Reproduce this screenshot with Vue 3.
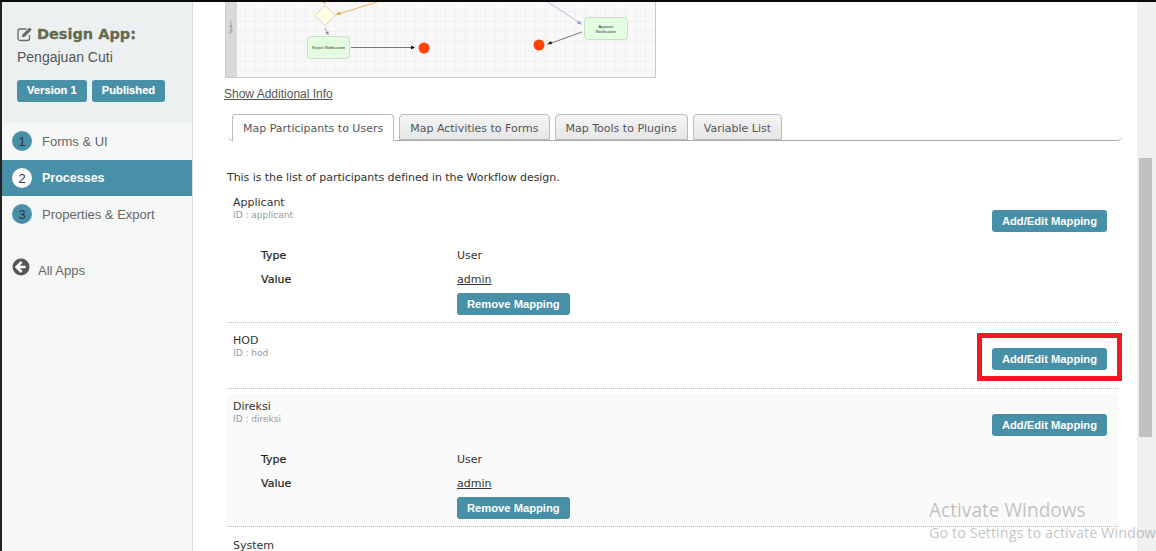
<script setup>
const participants = [
  { name: 'Applicant', id: 'applicant', mapped: true, shaded: false },
  { name: 'HOD', id: 'hod', mapped: false, shaded: false, marked: true },
  { name: 'Direksi', id: 'direksi', mapped: true, shaded: true }
]
const tabs = ['Map Participants to Users', 'Map Activities to Forms', 'Map Tools to Plugins', 'Variable List']
const menu = [
  { num: 1, label: 'Forms & UI' },
  { num: 2, label: 'Processes', active: true },
  { num: 3, label: 'Properties & Export' }
]
</script>

<template>
  <div class="screen">
    <aside class="sidebar">
      <div class="head">
        <h1 class="title">
          <svg class="edit" viewBox="0 0 16 16" width="16" height="16">
            <path d="M12.500 9v3.500a2 2 0 0 1-2 2H3a2 2 0 0 1-2-2V5a2 2 0 0 1 2-2h6.500" fill="none" stroke="#6b6b6b" stroke-width="1.300"/>
            <path d="M5.500 8.400 12.400 1.500l2.300 2.300-6.900 6.900-2.900.6z" fill="#6b6b6b"/>
          </svg>
          Design App:
        </h1>
        <div class="app-name">Pengajuan Cuti</div>
        <div class="badges">
          <span class="badge">Version 1</span>
          <span class="badge">Published</span>
        </div>
      </div>
      <nav class="menu">
        <a v-for="m in menu" :key="m.num" class="menu-item" :class="{ active: m.active }">
          <span class="num">{{ m.num }}</span>{{ m.label }}
        </a>
        <a class="all-apps">
          <svg viewBox="0 0 18 18" width="18" height="18">
            <circle cx="9" cy="9" r="8.500" fill="#555"/>
            <path d="M9.600 4 4.600 9l5 5M5 9h8.600" fill="none" stroke="#fff" stroke-width="2.600"/>
          </svg>
          All Apps
        </a>
      </nav>
    </aside>

    <main class="content">
      <div class="diagram">
        <svg viewBox="0 0 429 75" width="429" height="75">
          <defs>
            <pattern id="dots" width="10" height="10" patternUnits="userSpaceOnUse">
              <rect width="10" height="10" fill="#f8f8f8"/>
              <path d="M9.500 0v10M0 9.500h10" stroke="#ececec" stroke-width="1" stroke-dasharray="1 1"/>
            </pattern>
          </defs>
          <rect width="429" height="75" fill="url(#dots)"/>
          <rect width="11" height="75" fill="#d9d9d9"/>
          <text x="0" y="0" transform="translate(5.500 25) rotate(-90)" class="lane">System</text>
          <path d="M151 0 111 12.500" stroke="#e3b85a" fill="none"/>
          <path d="M109 13l5-3.500 1 3z" fill="#dfa93a"/>
          <path d="M96.500 0h3l-1 2z" fill="#e3a53a"/>
          <path d="M99 3.500 109 13.500 99 23.500 89 13.500z" fill="#fffde6" stroke="#d8d8b8"/>
          <path d="M99 26 102 32" stroke="#aaa" fill="none"/>
          <path d="M102.500 33.500l-3-3 3-1z" fill="#888"/>
          <path d="M322 0 354 21" stroke="#a9c2ea" fill="none"/>
          <path d="M356 22.500l-5-1 2-3z" fill="#7d9fdc"/>
          <rect x="81.500" y="34.500" width="42" height="22" rx="3" fill="#e4fde0" stroke="#cfdccf"/>
          <text x="102.500" y="46.500" class="node">Reject Notification</text>
          <path d="M125 45.500H186" stroke="#777" fill="none"/>
          <path d="M189 45.500l-4-2v4z" fill="#111"/>
          <circle cx="198" cy="46" r="5.500" fill="#ff4000"/>
          <rect x="358.500" y="15.500" width="43" height="22" rx="3" fill="#e4fde0" stroke="#cfdccf"/>
          <text x="380" y="26" class="node">Approve</text>
          <text x="380" y="30.500" class="node">Notification</text>
          <path d="M356 30 324 41.500" stroke="#777" fill="none"/>
          <path d="M321 42.500l4-3.500 1 3z" fill="#111"/>
          <circle cx="313" cy="43" r="5.500" fill="#ff4000"/>
        </svg>
      </div>
      <a class="more">Show Additional Info</a>

      <div class="tabs">
        <span v-for="(t, i) in tabs" :key="t" class="tab" :class="{ current: i === 0 }">{{ t }}</span>
      </div>

      <p class="intro">This is the list of participants defined in the Workflow design.</p>

      <div class="rows">
        <section v-for="p in participants" :key="p.id" class="row" :class="{ shaded: p.shaded, mapped: p.mapped }">
          <div class="row-top">
            <div>
              <div class="name">{{ p.name }}</div>
              <div class="pid">ID : {{ p.id }}</div>
            </div>
            <button class="btn add" :class="{ marked: p.marked }">Add/Edit Mapping</button>
          </div>
          <div v-if="p.mapped" class="detail">
            <div class="key">Type</div>
            <div>User</div>
            <div class="key">Value</div>
            <div>
              <a class="val-link">admin</a>
              <button class="btn remove">Remove Mapping</button>
            </div>
          </div>
        </section>
        <div class="name last">System</div>
      </div>
    </main>

    <div class="scrollbar"><div class="thumb"></div></div>

    <div class="activate">
      <div class="act-1">Activate Windows</div>
      <div class="act-2">Go to Settings to activate Windows.</div>
    </div>
  </div>
</template>

<style>
html, body { margin: 0; overflow: hidden; background: #fff; }
</style>

<style scoped>
.screen {
  position: relative;
  display: flex;
  width: 1156px;
  height: 551px;
  box-sizing: border-box;
  border-top: 2px solid #0a0a0a;
  overflow: hidden;
  background: #fff;
  font-family: "DejaVu Sans", sans-serif;
  font-size: 11px;
  color: #333;
}

.sidebar {
  width: 193px;
  flex: none;
  box-sizing: border-box;
  border-left: 2px solid #222;
  border-right: 1px solid #ddd;
  background: #f6f8f8;
  font-family: "Liberation Sans", sans-serif;
}
.head {
  height: 121px;
  box-sizing: border-box;
  padding: 23px 0 0 15px;
  background: #ecf0f1;
}
.title {
  display: flex;
  align-items: center;
  gap: 4px;
  margin: 0;
  height: 18px;
  font-family: "DejaVu Sans", sans-serif;
  font-size: 14.500px;
  font-weight: 700;
  color: #666a4e;
  -webkit-text-stroke: .3px #666a4e;
}
.app-name { margin-top: 5px; font-size: 14px; line-height: 18px; color: #555; }
.badges { display: flex; gap: 5px; margin-top: 14px; }
.badge {
  height: 22px;
  padding: 0 10px;
  border-radius: 3px;
  background: #4790a8;
  color: #fff;
  font-size: 11.200px;
  font-weight: 700;
  line-height: 21px;
  text-shadow: 0 0 1px rgba(255,255,255,.4);
}
.menu-item {
  display: flex;
  align-items: center;
  height: 37px;
  box-sizing: border-box;
  padding: 0 0 1px 10px;
  font-size: 13px;
  color: #666;
}
.menu-item.active {
  height: 36px;
  padding-bottom: 0;
  background: #4790a8;
  color: #fff;
  font-weight: 700;
  font-size: 12.500px;
}
.num {
  display: flex;
  align-items: center;
  justify-content: center;
  width: 20px;
  height: 20px;
  margin-right: 10px;
  border-radius: 50%;
  background: #4790a8;
  color: #333;
  font-size: 13px;
  font-weight: 400;
}
.active .num { background: #fff; }
.all-apps {
  display: flex;
  align-items: flex-start;
  gap: 8px;
  margin-top: 25px;
  padding-left: 10px;
  height: 20px;
  font-size: 13px;
  line-height: 25px;
  color: #666;
}

.content {
  flex: 1;
  min-width: 0;
  padding: 0 15px 0 32px;
}
.diagram {
  width: 429px;
  height: 75px;
  border: solid #ccc;
  border-width: 0 1px 1px 1px;
}
.diagram svg { display: block; }
.lane { font: 4px "Liberation Sans", sans-serif; fill: #777; text-anchor: middle; }
.node { font: 4.100px "Liberation Sans", sans-serif; fill: #333; text-anchor: middle; }
.more {
  display: block;
  margin: 8px 0 0 -1px;
  font: 12px/16px "Liberation Sans", sans-serif;
  color: #555;
  text-decoration: underline;
}

.tabs {
  display: flex;
  gap: 5px;
  height: 26px;
  margin: 12px 0 0 3px;
  padding-left: 4px;
  border-bottom: 1px solid #aaa;
  border-radius: 0 0 5px 5px;
}
.tab {
  height: 26px;
  box-sizing: border-box;
  padding: 0 10px;
  border: 1px solid #bbb;
  border-radius: 4px 4px 0 0;
  background: linear-gradient(#f4f4f4, #e6e6e6);
  color: #555;
  line-height: 27px;
}
.tab.current { height: 27px; background: #fff; border-bottom: 0; }

.intro { margin: 30px 0 0 2px; line-height: 14px; color: #333; letter-spacing: -.06px; }

.rows { margin: 0 4px 0 2px; }
.row {
  padding: 11px 11px 6px 6px;
  border-bottom: 1px dotted #bbb;
  height: 48px;
}
.row.mapped { height: 120px; }
.row.shaded { margin-top: 5px; background: #fafafa; padding-top: 6px; }
.row-top { display: flex; justify-content: space-between; align-items: flex-start; }
.name { font-size: 11px; line-height: 14px; color: #333; }
.pid { font-size: 9px; line-height: 11px; color: #999; }
.btn {
  display: block;
  height: 22px;
  padding: 0 10px;
  border: 0;
  border-radius: 3px;
  background: #4790a8;
  color: #fff;
  font: 700 11.200px/22px "Liberation Sans", sans-serif;
}
.add { position: relative; margin-top: 14px; }
.marked::after {
  content: "";
  position: absolute;
  inset: -15px;
  bottom: -11px;
  border: 5px solid #ed1c24;
}
.detail {
  display: grid;
  grid-template-columns: 196px 1fr;
  grid-auto-rows: 24px;
  margin: 12px 0 0 28px;
  line-height: 24px;
}
.key { color: #222; -webkit-text-stroke: .2px #222; }
.val-link { display: block; text-decoration: underline; line-height: 24px; color: #333; }
.remove { margin-top: 1px; }
.last { margin: 12px 0 0 6px; }

.scrollbar {
  width: 19px;
  flex: none;
  background: #f0f0f0;
  padding: 156px 4px 0 2px;
  box-sizing: border-box;
}
.thumb { height: 279px; background: #c1c1c1; }

.activate {
  position: absolute;
  left: 929px;
  top: 495px;
  white-space: nowrap;
  font-family: "Open Sans", sans-serif;
  color: rgba(120,120,120,.45);
}
.act-1 { font-size: 19.100px; line-height: 26px; }
.act-2 { font-size: 14.500px; line-height: 20px; }
</style>
